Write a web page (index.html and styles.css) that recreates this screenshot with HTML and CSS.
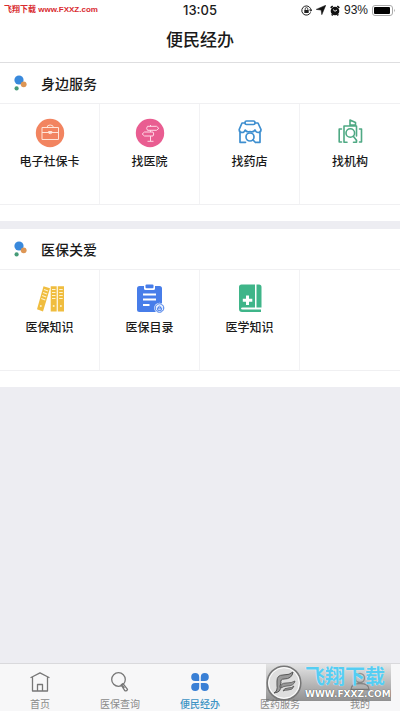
FILE: index.html
```html
<!DOCTYPE html>
<html lang="zh-CN">
<head>
<meta charset="utf-8">
<meta name="viewport" content="width=device-width, initial-scale=1">
<title>便民经办</title>
<link rel="stylesheet" href="styles.css">
</head>
<body>
<header class="top">
  <div class="status">
    <span class="source">飞翔下载 www.FXXZ.com</span>
    <time class="clock">13:05</time>
    <div class="indicators">
      <svg width="11" height="11" viewBox="0 0 11 11" fill="none" stroke="#222" aria-hidden="true"><path d="M9.6 7.4A4.6 4.6 0 1 1 10 5.5M8.3 4.8l1.7 1.4.8-1.8"/><path fill="#222" stroke="none" d="M3.3 5h4.4v3H3.3z"/><path d="M4.2 5V3.9a1.3 1.3 0 0 1 2.6 0V5" stroke-width=".8"/></svg>
      <svg width="10" height="10" viewBox="0 0 10 10" fill="#111" aria-hidden="true"><path d="M9.8.2 5.8 9.7 5.1 5.1.2 4.4z" stroke="#111" stroke-width=".5"/></svg>
      <svg width="10" height="11" viewBox="0 0 10 11" aria-hidden="true"><circle cx="5" cy="6" r="4.3" fill="#111"/><path d="M.7 2.9 2.7 1M9.3 2.9 7.3 1M1.7 10.4l1-1M8.3 10.4l-1-1" stroke="#111" stroke-width="1.6"/><path d="m3 4.5 2 1.8 2-1.3" stroke="#fff" fill="none" stroke-width=".9"/></svg>
      <span>93%</span>
      <svg class="battery" width="24" height="11" viewBox="0 0 24 11" aria-hidden="true"><rect x=".5" y=".5" width="20" height="10" rx="2.5" fill="#fff" stroke="#aaa"/><rect x="2" y="2" width="16" height="7" rx="1" fill="#000"/><path d="M22 3.7q1.6 1.8 0 3.6z" fill="#999"/></svg>
    </div>
  </div>
  <h1 class="title">便民经办</h1>
</header>

<main class="content">
  <section class="panel">
    <h2 class="heading">
      <svg width="14" height="16" viewBox="0 0 14 16" aria-hidden="true"><circle cx="5" cy="5" r="4.6" fill="#3989dc"/><circle cx="9.7" cy="9.3" r="2.9" fill="#dd9655"/><circle cx="2.6" cy="13.4" r="2.1" fill="#459b78"/></svg>
      身边服务
    </h2>
    <div class="grid">
      <a class="tile" href="#card">
        <svg width="30" height="30" viewBox="0 0 30 30" fill="none" stroke="#ffe5d8" stroke-width="1" aria-hidden="true"><circle cx="15" cy="15" r="14.2" fill="#f28460" stroke="none"/><path d="M7 9.5h16.500v12H7zM7 14.500h16.500M12 9.500q0-2.500 3.200-2.500t3.200 2.500M13.500 13.500v1.500q1.700 1.500 3.400 0v-1.500z"/></svg>
        <span>电子社保卡</span>
      </a>
      <a class="tile" href="#hospital">
        <svg width="30" height="30" viewBox="0 0 30 30" fill="none" stroke="#ffd9e7" stroke-width="1" aria-hidden="true"><circle cx="15" cy="15" r="14.200" fill="#e95d91" stroke="none"/><path d="M12.500 8.300h9l2.300 2-2.300 2h-9q-1.700-2 0-4zM18 14h-8.500l-2.300 2 2.300 2H18q1.500-2 0-4zM15.500 7v1.300M15.500 12.300V14M15.500 18v5.200M12.500 23.300h6"/></svg>
        <span>找医院</span>
      </a>
      <a class="tile" href="#pharmacy">
        <svg width="30" height="30" viewBox="0 0 30 30" fill="none" stroke="#3e8fd0" stroke-width="1.700" stroke-linecap="round" stroke-linejoin="round" aria-hidden="true"><rect x="10" y="3" width="10" height="3.500" rx="1.500"/><path d="M10 5H7l-2.800 6.500q0 3 2.800 3 2.500 0 3.200-2.500 1.500 2.500 4.800 1.500 3.500 1 5-1.500 1 2.500 3.200 2.500 2.800 0 2.800-3L23 5h-3M5 14.500v9.800h5.500M25 14.500v9.800h-3.500"/><circle cx="15" cy="19" r="4"/><path d="m18 22 2.500 2.500"/></svg>
        <span>找药店</span>
      </a>
      <a class="tile" href="#agency">
        <svg width="30" height="30" viewBox="0 0 30 30" fill="none" stroke="#4fa984" stroke-width="1.600" stroke-linecap="round" stroke-linejoin="round" aria-hidden="true"><path d="M12 24.300H9V8h12.500v10M21.500 22.500v1.800h-3M15 8V2l5.500 2.500V7H15M6.500 11H4.200v13h2.300M24.500 11h2v13h-2"/><circle cx="15.300" cy="15" r="4.300"/><path d="m18.300 18.200 3.200 4"/></svg>
        <span>找机构</span>
      </a>
    </div>
  </section>

  <section class="panel">
    <h2 class="heading">
      <svg width="14" height="16" viewBox="0 0 14 16" aria-hidden="true"><circle cx="5" cy="5" r="4.600" fill="#3989dc"/><circle cx="9.700" cy="9.300" r="2.900" fill="#dd9655"/><circle cx="2.600" cy="13.400" r="2.100" fill="#459b78"/></svg>
      医保关爱
    </h2>
    <div class="grid">
      <a class="tile" href="#knowledge">
        <svg width="30" height="30" viewBox="0 0 30 30" aria-hidden="true"><g fill="#f0bd3f"><path d="m8.500 2.200 6.500 2L8 27.500l-6-2.300z"/><path d="M15.700 2.200h6v25.300h-6zM22.800 2.200H29v25.300h-6.200z"/></g><path d="m9 5.500 4 1.500M8.100 8.500l4 1.500M7.200 11.500l4 1.500M6.300 14.500l4 1.500M17 5.500h3.500M17 8.500h3.500M17 11.500h3.500M17 14.500h3.500M24.200 5.500h3.500M24.200 8.500h3.500M24.200 11.500h3.500M24.200 14.500h3.500" stroke="#fff4cf" stroke-width="1.200"/><g fill="#fff1c5"><circle cx="5.800" cy="22" r="1"/><circle cx="18.700" cy="22" r="1"/><circle cx="25.900" cy="22" r="1"/></g></svg>
        <span>医保知识</span>
      </a>
      <a class="tile" href="#catalog">
        <svg width="30" height="30" viewBox="0 0 30 30" aria-hidden="true"><rect x="2" y="2" width="25" height="26" rx="2.500" fill="#477de9"/><path d="M9 1h11v3.500q0 1.500-1.500 1.500h-8Q9 6 9 4.500z" fill="#fff"/><rect x="10.500" y=".5" width="8" height="3.800" rx="1" fill="#477de9"/><path d="M8 10.500h13M8 15.500h13M8 21h6.500" stroke="#fff" stroke-width="1.800"/><circle cx="24.500" cy="24" r="5.300" fill="#fff"/><circle cx="24.500" cy="24" r="4.300" fill="#e2edff" stroke="#477de9"/><path d="M22.700 24h3.600v2.300h-3.600zM23.300 24v-1q1.200-1.700 2.400 0v1" fill="none" stroke="#477de9"/></svg>
        <span>医保目录</span>
      </a>
      <a class="tile" href="#medicine">
        <svg width="30" height="30" viewBox="0 0 30 30" aria-hidden="true"><path d="M6.500.5H20v23H7.500q-1.500 0-1.500 1t1.500 1H26V28H7q-3 0-3-3V3Q4 .5 6.500.5zM21.500.5h2.500q2.500 0 2.500 2.500v20.500h-5z" fill="#3fb589"/><path d="M12.500 11.500v9.500M7.800 16.200h9.500" stroke="#fff" stroke-width="3"/></svg>
        <span>医学知识</span>
      </a>
      <div class="tile"></div>
    </div>
  </section>
</main>

<nav class="tabs">
  <a class="tab" href="#home">
    <svg width="22" height="22" viewBox="0 0 22 22" fill="none" stroke="#777" stroke-width="1.300" stroke-linejoin="round" aria-hidden="true"><path d="m2 6.500 9-4.700 9 4.700M3.500 6v14h15V6M8.500 20v-6.500h5V20" stroke-linecap="round"/></svg>
    <span>首页</span>
  </a>
  <a class="tab" href="#query">
    <svg width="22" height="22" viewBox="0 0 22 22" fill="none" stroke="#777" stroke-width="1.300" aria-hidden="true"><circle cx="9.500" cy="8.500" r="6.800"/><path d="m12.200 13.800 1.800-1.200 4.500 5.800q-.8 2-2.700 1.300zM13.300 14.500l2 2.500" stroke-linejoin="round"/></svg>
    <span>医保查询</span>
  </a>
  <a class="tab tab-active" href="#service" aria-current="page">
    <svg width="22" height="22" viewBox="0 0 22 22" fill="#397fd5" aria-hidden="true"><path d="M6.200 2a4 4 0 0 1 4 4v4h-4a4 4 0 0 1 0-8zM15.800 2a4 4 0 0 0-4 4v4h4a4 4 0 0 0 0-8zM6.200 20a4 4 0 0 0 4-4v-4h-4a4 4 0 0 0 0 8zM15.800 20a4 4 0 0 1-4-4v-4h4a4 4 0 0 1 0 8z"/></svg>
    <span>便民经办</span>
  </a>
  <a class="tab" href="#drug">
    <svg width="22" height="22" viewBox="0 0 22 22" aria-hidden="true"></svg>
    <span>医药服务</span>
  </a>
  <a class="tab" href="#mine">
    <svg width="22" height="22" viewBox="0 0 22 22" fill="none" stroke="#555" stroke-width="1.300" aria-hidden="true"><circle cx="11" cy="7" r="4.500"/><path d="M2 18.500q0-6 9-6t9 6z"/></svg>
    <span>我的</span>
  </a>
  <div class="mark">
    <svg width="36" height="36" viewBox="0 0 36 36" aria-hidden="true"><circle cx="18" cy="18" r="16.800" fill="#dedede" stroke="#777" stroke-width="1.500"/><circle cx="18" cy="18" r="15.300" fill="none" stroke="#fff"/><path d="M8 28q4-2 3-8v-4q0-6 6-6 7 0 10-3-1 7-9 7-4 0-3 4l-1 3q2 6-6 7z" fill="#999" stroke="#555"/><path d="M15 23q-1-5 5-5 6 0 9-2-1 5-8 5-3 0-6 2zM17 26q1-3 5-3 4 0 6-2-1 4-6 4-3 0-5 1z" fill="#999" stroke="#555" stroke-width=".8"/></svg>
    <div class="mark-text"><b>飞翔下载</b><small>WWW.FXXZ.COM</small></div>
  </div>
</nav>
</body>
</html>
```
FILE: styles.css
```css
* { box-sizing: border-box; }
body {
  margin: 0;
  min-height: 100vh;
  display: flex;
  flex-direction: column;
  background: #ededf2;
  color: #1a1a1a;
  font-family: "Liberation Sans", "Noto Sans CJK SC", sans-serif;
}
a { color: inherit; text-decoration: none; }
svg { display: block; flex: none; }
h1, h2 { margin: 0; font-weight: 500; }

.top { background: #fff; border-bottom: 1px solid #dedee0; }
.status {
  display: grid;
  grid-template-columns: 1fr auto 1fr;
  align-items: center;
  height: 20px;
  padding: 0 4px;
}
.source {
  font: bold 8px/20px "Liberation Sans", "Noto Sans CJK SC", sans-serif;
  color: #d92b30;
  white-space: nowrap;
}
.clock { font: 500 13px/20px Inter, sans-serif; }
.indicators {
  display: flex;
  align-items: center;
  justify-content: flex-end;
  gap: 4px;
  font-size: 12px;
}
.title { font-size: 17px; line-height: 42px; text-align: center; }

.content { flex: 1; }
.panel { background: #fff; padding-bottom: 16px; margin-bottom: 8px; }
.heading {
  display: flex;
  align-items: center;
  gap: 13px;
  height: 40px;
  padding-left: 14px;
  font-size: 14px;
}
.grid {
  display: grid;
  grid-template-columns: repeat(4, 1fr);
  border-top: 1px solid #f0f0f2;
  border-bottom: 1px solid #f0f0f2;
}
.tile {
  display: flex;
  flex-direction: column;
  align-items: center;
  gap: 4px;
  height: 100px;
  padding-top: 14px;
  border-right: 1px solid #f2f2f4;
  font-size: 12px;
  font-weight: 500;
  line-height: 20px;
}
.tile:last-child { border-right: 0; }

.tabs {
  position: relative;
  display: grid;
  grid-template-columns: repeat(5, 1fr);
  height: 48px;
  background: #f7f7f8;
  border-top: 1px solid #d9d9dc;
}
.tab {
  display: flex;
  flex-direction: column;
  align-items: center;
  gap: 5px;
  padding-top: 7px;
  color: #8a8a8a;
  font-size: 10px;
  line-height: 14px;
}
.tab-active { color: #3c93c4; font-weight: 500; }

.mark {
  position: absolute;
  top: 0;
  right: 9px;
  display: flex;
  align-items: center;
  gap: 3px;
  width: 125px;
  height: 37px;
  background: linear-gradient(rgba(215, 215, 215, .6), rgba(110, 110, 110, .75));
}
.mark-text { display: flex; flex-direction: column; }
.mark b {
  color: #55cdf2;
  font-size: 20px;
  line-height: 24px;
  text-shadow: 0 0 1px #fff;
}
.mark small {
  color: #fff;
  font: bold 9px/11px "DejaVu Sans", sans-serif;
  text-shadow: 0 0 1px #333;
}
```
